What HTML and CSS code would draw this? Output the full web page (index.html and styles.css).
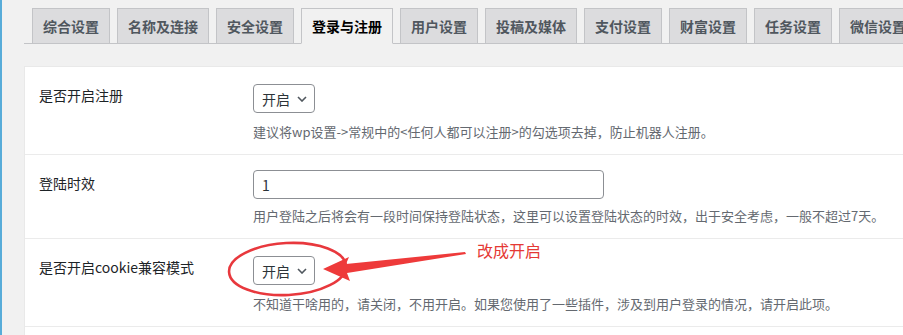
FILE: index.html
```html
<!DOCTYPE html>
<html lang="zh-CN">
<head>
    <meta charset="UTF-8">
    <meta name="viewport" content="width=device-width, initial-scale=1.0">
    <title>登录与注册设置</title>
    <link rel="stylesheet" href="styles.css">
</head>
<body>
    <div class="admin-edge"></div>
    <div class="wrap">
        <nav class="nav-tabs">
            <a class="nav-tab">综合设置</a>
            <a class="nav-tab">名称及连接</a>
            <a class="nav-tab">安全设置</a>
            <a class="nav-tab nav-tab-active">登录与注册</a>
            <a class="nav-tab">用户设置</a>
            <a class="nav-tab">投稿及媒体</a>
            <a class="nav-tab">支付设置</a>
            <a class="nav-tab">财富设置</a>
            <a class="nav-tab">任务设置</a>
            <a class="nav-tab">微信设置</a>
        </nav>

        <div class="panel">
            <div class="form-row">
                <div class="form-label">是否开启注册</div>
                <div class="form-field">
                    <span class="select">开启
                        <svg class="chevron" width="10" height="6" viewBox="0 0 10 6"><path d="M1 1l4 4 4-4" fill="none" stroke="#50575e" stroke-width="1.6"/></svg>
                    </span>
                    <p class="description">建议将wp设置-&gt;常规中的&lt;任何人都可以注册&gt;的勾选项去掉，防止机器人注册。</p>
                </div>
            </div>

            <div class="form-row">
                <div class="form-label">登陆时效</div>
                <div class="form-field form-field-text">
                    <span class="text-input">1</span>
                    <p class="description">用户登陆之后将会有一段时间保持登陆状态，这里可以设置登陆状态的时效，出于安全考虑，一般不超过7天。</p>
                </div>
            </div>

            <div class="form-row">
                <div class="form-label">是否开启cookie兼容模式</div>
                <div class="form-field">
                    <span class="select">开启
                        <svg class="chevron" width="10" height="6" viewBox="0 0 10 6"><path d="M1 1l4 4 4-4" fill="none" stroke="#50575e" stroke-width="1.6"/></svg>
                    </span>
                    <p class="description">不知道干啥用的，请关闭，不用开启。如果您使用了一些插件，涉及到用户登录的情况，请开启此项。</p>
                </div>
            </div>
        </div>
    </div>

    <!-- red hand-drawn note on top of the screenshot -->
    <svg class="annotation" width="903" height="335" viewBox="0 0 903 335">
        <ellipse cx="287.5" cy="269" rx="58.5" ry="26" fill="none" stroke="#e8383d" stroke-width="2.6" transform="rotate(-3 287.5 269)"/>
        <polygon points="323,269 349,257 346,264 465,252 466,254 347,273 350,281" fill="#ee3a3a"/>
        <text x="477" y="257" class="note">改成开启</text>
    </svg>
</body>
</html>
```

FILE: styles.css
```css
body {
    margin: 0;
    display: flex;
    min-height: 335px;
    background-color: #f1f1f1;
    font-family: "Noto Sans CJK SC", "Noto Sans", sans-serif;
    color: #1d2327;
    position: relative;
    overflow: hidden;
}
.admin-edge {
    width: 2px;
    flex: none;
    background-color: #58acd9;
}
.wrap {
    flex: 1;
    padding-left: 22px;
}
.nav-tabs {
    display: flex;
    gap: 7px;
    padding: 8px 0 0 8px;
    border-bottom: 1px solid #c3c4c7;
    white-space: nowrap;
}
.nav-tab {
    flex: none;
    padding: 5px 10px;
    font-size: 14px;
    line-height: 24px;
    font-weight: 700;
    color: #50575e;
    background-color: #dcdcde;
    border: 1px solid #c3c4c7;
    margin-bottom: -1px;
}
.nav-tab-active {
    color: #000;
    background-color: #f1f1f1;
    border-bottom-color: #f1f1f1;
}
.panel {
    margin-top: 22px;
    background-color: #fff;
    border-top: 1px solid #e9e9e9;
    border-left: 1px solid #e9e9e9;
    min-height: 269px;
}
.form-row {
    display: grid;
    grid-template-columns: 214px 1fr;
    padding: 0 10px 0 14px;
    border-bottom: 1px solid #ebebeb;
}
.form-label {
    padding-top: 18px;
    font-size: 14px;
    line-height: 20px;
}
.form-field {
    padding: 17px 0 12px;
}
.form-field-text {
    padding-top: 15px;
}
.select {
    display: inline-flex;
    align-items: center;
    gap: 7px;
    height: 27px;
    padding: 0 7px 0 8px;
    border: 1px solid #8c8f94;
    border-radius: 4px;
    font-size: 14px;
    color: #2c3338;
}
.text-input {
    display: flex;
    align-items: center;
    box-sizing: border-box;
    width: 351px;
    height: 29px;
    padding: 0 8px;
    border: 1px solid #8c8f94;
    border-radius: 4px;
    font-size: 14px;
    color: #2c3338;
}
.description {
    margin: 9px 0 0;
    font-size: 13px;
    line-height: 20px;
    color: #646970;
    white-space: nowrap;
}
.form-field-text .description {
    margin-top: 7px;
}
.annotation {
    position: absolute;
    left: 0;
    top: 0;
    pointer-events: none;
}
.note {
    font-family: "Noto Sans CJK SC", sans-serif;
    font-size: 16px;
    fill: #e53935;
}
```
